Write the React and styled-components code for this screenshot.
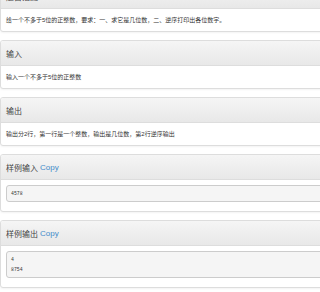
import styled, { createGlobalStyle } from "styled-components";

const GlobalStyle = createGlobalStyle`
  html, body {
    margin: 0;
    padding: 0;
    background: #fff;
    overflow: hidden;
  }
  body {
    font-family: "Liberation Sans", "Noto Sans CJK SC", sans-serif;
    color: #333;
  }
`;

// page is scrolled a bit, first panel heading sits above the top edge
const Page = styled.div`
  width: 420px;
  margin-top: -17px;
`;

const Panel = styled.div`
  border: 1px solid #ddd;
  border-radius: 3px;
  background: #fff;
  box-shadow: 0 1px 2px rgba(0, 0, 0, 0.05);
  margin-bottom: 8px;
`;

const Heading = styled.div`
  height: 24px;
  display: flex;
  align-items: center;
  padding: 0 5px;
  border-bottom: 1px solid #ddd;
  border-radius: 2px 2px 0 0;
  background: linear-gradient(to bottom, #f5f5f5 0%, #e8e8e8 100%);
  font-size: 8px;
  color: #444;
  white-space: nowrap;

  a {
    color: #428bca;
    text-decoration: none;
    margin-left: 2px;
  }
`;

const Body = styled.div`
  height: ${(props) => (props.tall ? "auto" : "22px")};
  display: flex;
  flex-direction: column;
  justify-content: center;
  padding: ${(props) => (props.tall ? "5px 5px 6px" : "0 5px")};
  font-size: 6px;
  line-height: 10px;
  white-space: nowrap;
`;

const Pre = styled.pre`
  margin: 0 0 3px;
  padding: 3px 4px 2px;
  background: #f5f5f5;
  border: 1px solid #ccc;
  border-radius: 3px;
  font-family: "Liberation Mono", monospace;
  font-size: 4.8px;
  line-height: 10px;
  color: #333;
`;

const sections = [
  { title: "题目描述", text: "给一个不多于5位的正整数，要求：一、求它是几位数，二、逆序打印出各位数字。" },
  { title: "输入", text: "输入一个不多于5位的正整数" },
  { title: "输出", text: "输出分2行，第一行是一个整数，输出是几位数，第2行逆序输出" },
  { title: "样例输入", code: "4578" },
  { title: "样例输出", code: "4\n8754" },
];

export default function App() {
  return (
    <>
      <GlobalStyle />
      <Page>
        {sections.map((s) => (
          <Panel key={s.title}>
            <Heading>
              {s.title}
              {s.code && <a href="#">Copy</a>}
            </Heading>
            {s.code ? (
              <Body tall>
                <Pre>{s.code}</Pre>
              </Body>
            ) : (
              <Body>{s.text}</Body>
            )}
          </Panel>
        ))}
      </Page>
    </>
  );
}
